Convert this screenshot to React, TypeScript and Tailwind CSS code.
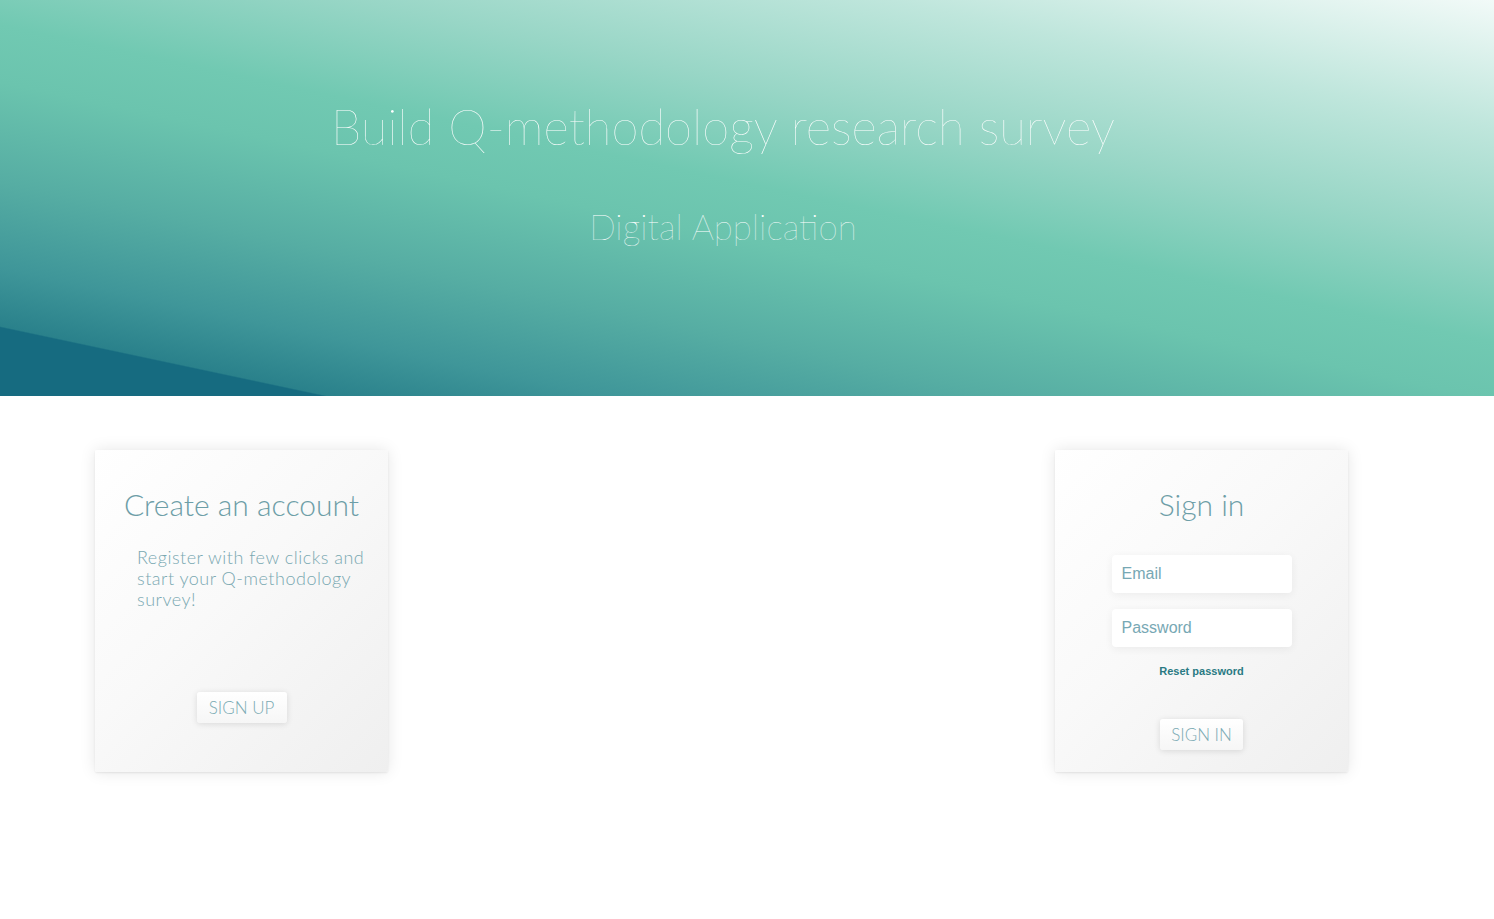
export default function App() {
  return (
    <div className="min-h-[919px] bg-white font-['Lato','Open_Sans',sans-serif]">
      {/* hero */}
      <header className="h-[396px] bg-[linear-gradient(12deg,#166b80_0%,#166b80_9.6%,#2a818b_9.8%,#3f9699_18%,#56ada3_30%,#6bc4ae_44%,#71c9b2_52%,#98d6c6_66%,#bfe6dc_82%,#f2faf8_100%)] pr-[48px] pt-[94px] text-center text-white">
        <h1 className="text-[49px] font-thin leading-[64px]">Build Q-methodology research survey</h1>
        <p className="mt-[46px] text-[35px] font-thin leading-[44px]">Digital Application</p>
      </header>

      <main className="flex pt-[54px]">
        {/* register card */}
        <section className="ml-[95px] flex h-[322px] w-[293px] flex-col items-center rounded-[2px] bg-[linear-gradient(135deg,#ffffff_0%,#f9f9f9_45%,#efefef_100%)] pt-[36px] shadow-[0_0_16px_rgba(0,0,0,0.10),0_1px_2px_rgba(0,0,0,0.08)]">
          <h2 className="whitespace-nowrap text-[30px] font-light leading-[36px] text-[#6d9ea7]">Create an account</h2>
          <p className="mt-[25px] self-start whitespace-nowrap pl-[42px] text-[18px] font-light leading-[21px] tracking-[0.5px] text-[#79a8b1]">
            Register with few clicks and
            <br />
            start your Q-methodology
            <br />
            survey!
          </p>
          <button className="mt-[82px] h-[31px] w-[90px] rounded-[3px] bg-[linear-gradient(180deg,#ffffff,#f6f6f6)] text-[17px] font-light uppercase text-[#7aaab3] shadow-[0_1px_6px_rgba(0,0,0,0.12)]">
            Sign up
          </button>
        </section>

        {/* sign in card */}
        <section className="ml-auto mr-[146px] flex h-[322px] w-[293px] flex-col items-center rounded-[2px] bg-[linear-gradient(135deg,#ffffff_0%,#f9f9f9_45%,#efefef_100%)] pt-[36px] shadow-[0_0_16px_rgba(0,0,0,0.10),0_1px_2px_rgba(0,0,0,0.08)]">
          <h2 className="text-[30px] font-light leading-[36px] text-[#6d9ea7]">Sign in</h2>
          <input
            placeholder="Email"
            className="mt-[33px] h-[38px] w-[180px] rounded-[4px] bg-white px-[10px] font-['Liberation_Sans',Arial,sans-serif] text-[16px] text-[#4d8390] shadow-[0_2px_8px_rgba(0,0,0,0.06)] outline-none placeholder:text-[#77a8b4]"
          />
          <input
            type="password"
            placeholder="Password"
            className="mt-[16px] h-[38px] w-[180px] rounded-[4px] bg-white px-[10px] font-['Liberation_Sans',Arial,sans-serif] text-[16px] text-[#4d8390] shadow-[0_2px_8px_rgba(0,0,0,0.06)] outline-none placeholder:text-[#77a8b4]"
          />
          <a className="mt-[17px] font-['Liberation_Sans',Arial,sans-serif] text-[11px] font-bold leading-[14px] text-[#2a7a83]">
            Reset password
          </a>
          <button className="mt-[41px] h-[31px] w-[83px] rounded-[3px] bg-[linear-gradient(180deg,#ffffff,#f6f6f6)] text-[17px] font-light uppercase text-[#7aaab3] shadow-[0_1px_6px_rgba(0,0,0,0.12)]">
            Sign in
          </button>
        </section>
      </main>
    </div>
  );
}
